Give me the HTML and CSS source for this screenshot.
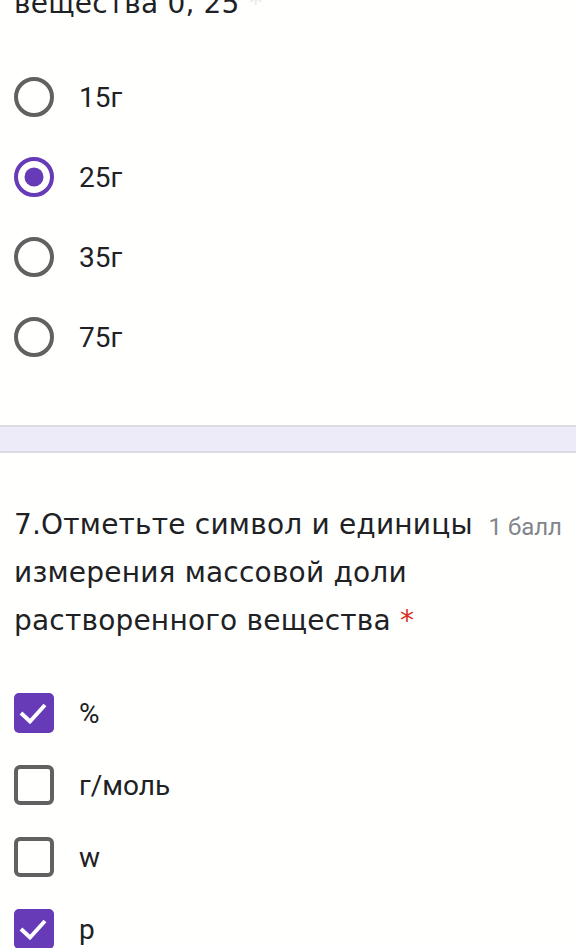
FILE: index.html
```html
<!DOCTYPE html>
<html lang="ru">
<head>
<meta charset="utf-8">
<link rel="stylesheet" href="styles.css">
</head>
<body>
<section class="card first">
  <div class="q-title">вещества 0, 25 <span class="faint">*</span></div>
  <div class="radios">
    <label class="opt radio-opt">
      <svg class="icon" viewBox="0 0 40 40"><circle cx="20" cy="20" r="18" fill="none" stroke="#616161" stroke-width="4"/></svg>
      <span class="opt-text">15г</span>
    </label>
    <label class="opt radio-opt">
      <svg class="icon" viewBox="0 0 40 40"><circle cx="20" cy="20" r="18" fill="none" stroke="#673ab7" stroke-width="4"/><circle cx="20" cy="20" r="9.5" fill="#673ab7"/></svg>
      <span class="opt-text">25г</span>
    </label>
    <label class="opt radio-opt">
      <svg class="icon" viewBox="0 0 40 40"><circle cx="20" cy="20" r="18" fill="none" stroke="#616161" stroke-width="4"/></svg>
      <span class="opt-text">35г</span>
    </label>
    <label class="opt radio-opt">
      <svg class="icon" viewBox="0 0 40 40"><circle cx="20" cy="20" r="18" fill="none" stroke="#616161" stroke-width="4"/></svg>
      <span class="opt-text">75г</span>
    </label>
  </div>
</section>
<div class="separator"></div>
<section class="card second">
  <div class="q-head">
    <div class="q-title">7.Отметьте символ и единицы измерения массовой доли растворенного вещества <span class="req">*</span></div>
    <div class="points">1 балл</div>
  </div>
  <div class="checks">
    <label class="opt check-opt">
      <svg class="icon" viewBox="0 0 40 40"><rect x="0" y="0" width="40" height="40" rx="5" fill="#673ab7"/><path d="M7 20 L16 28.5 L31 12" fill="none" stroke="#fff" stroke-width="4"/></svg>
      <span class="opt-text">%</span>
    </label>
    <label class="opt check-opt">
      <svg class="icon" viewBox="0 0 40 40"><rect x="2" y="2" width="36" height="36" rx="4" fill="none" stroke="#616161" stroke-width="4"/></svg>
      <span class="opt-text">г/моль</span>
    </label>
    <label class="opt check-opt">
      <svg class="icon" viewBox="0 0 40 40"><rect x="2" y="2" width="36" height="36" rx="4" fill="none" stroke="#616161" stroke-width="4"/></svg>
      <span class="opt-text">w</span>
    </label>
    <label class="opt check-opt">
      <svg class="icon" viewBox="0 0 40 40"><rect x="0" y="0" width="40" height="40" rx="5" fill="#673ab7"/><path d="M7 20 L16 28.5 L31 12" fill="none" stroke="#fff" stroke-width="4"/></svg>
      <span class="opt-text">р</span>
    </label>
  </div>
</section>
</body>
</html>
```

FILE: styles.css
```css
html, body {
  margin: 0;
  padding: 0;
  background: #fffffe;
}
body {
  width: 576px;
  height: 948px;
  overflow: hidden;
  color: #202124;
  font-family: "DejaVu Sans", "Noto Sans", sans-serif;
}
.card {
  padding: 0 14px;
}
.first {
  margin-top: -20px;
  padding-bottom: 48px;
}
.first .radios {
  margin-top: 29px;
}
.q-title {
  font-size: 28px;
  line-height: 48px;
  letter-spacing: 0.2px;
}
.faint {
  color: #ececec;
}
.req {
  color: #d93025;
}
.radios {
  display: flex;
  flex-direction: column;
}
.opt {
  display: flex;
  align-items: center;
  gap: 25px;
}
.radio-opt {
  height: 80px;
}
.check-opt {
  height: 72px;
}
.icon {
  width: 40px;
  height: 40px;
  flex: none;
}
.opt-text {
  font-family: Roboto, "Liberation Sans", sans-serif;
  font-size: 28px;
  color: #202124;
}
.separator {
  height: 24px;
  background: #edebf8;
  border-top: 2px solid #dcdae2;
  border-bottom: 2px solid #dcdae2;
}
.second {
  padding-top: 48px;
}
.q-head {
  display: flex;
  align-items: flex-start;
  gap: 12px;
}
.q-head .q-title {
  flex: 1;
}
.points {
  flex: none;
  font-family: Roboto, "Liberation Sans", sans-serif;
  font-size: 24px;
  line-height: 48px;
  padding-top: 2px;
  color: #80868b;
}
.checks {
  margin-top: 32px;
  display: flex;
  flex-direction: column;
}
```
